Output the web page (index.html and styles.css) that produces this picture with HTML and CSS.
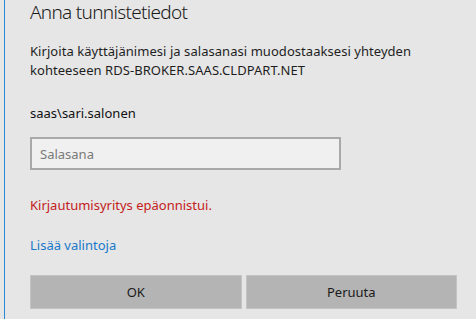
FILE: index.html
```html
<!DOCTYPE html>
<html lang="fi">
<head>
    <meta charset="UTF-8">
    <title>Anna tunnistetiedot</title>
    <link rel="stylesheet" href="styles.css">
</head>
<body>
    <div class="dialog">
        <h1 class="title">Anna tunnistetiedot</h1>
        <p class="desc">Kirjoita käyttäjänimesi ja salasanasi muodostaaksesi yhteyden<br>kohteeseen RDS-BROKER.SAAS.CLDPART.NET</p>
        <div class="user">saas\sari.salonen</div>
        <input class="password" type="password" placeholder="Salasana">
        <div class="error">Kirjautumisyritys epäonnistui.</div>
        <a class="more" href="#">Lisää valintoja</a>
        <div class="buttons">
            <button class="btn">OK</button>
            <button class="btn">Peruuta</button>
        </div>
    </div>
</body>
</html>
```

FILE: styles.css
```css
body {
    margin: 0;
    padding: 0;
    background-color: #e6e6e6;
    font-family: "Noto Sans", "Open Sans", sans-serif;
    font-size: 13px;
    line-height: 19px;
    color: #1e1e1e;
}
.dialog {
    margin-left: 4px;
    border-left: 1px solid #2b88d8;
    padding: 0 19px 10px 25px;
    height: 309px;
    display: flex;
    flex-direction: column;
    align-items: flex-start;
}
.title {
    margin: 0;
    font-size: 19px;
    line-height: 24px;
    font-weight: 300;
    letter-spacing: -0.7px;
    color: #1a1a1a;
}
.desc {
    margin: 18px 0 0;
    letter-spacing: 0.05px;
}
.user {
    margin-top: 24px;
    color: #111;
}
.password {
    margin-top: 14px;
    width: 311px;
    height: 33px;
    box-sizing: border-box;
    border: 2px solid #a9a9a9;
    background-color: #f0f0f0;
    padding: 0 8px;
    font-family: inherit;
    font-size: 13px;
    outline: none;
}
.password::placeholder {
    color: #7a7a7a;
}
.error {
    margin-top: 26px;
    color: #c42020;
}
.more {
    margin-top: 21px;
    color: #1979ca;
    text-decoration: none;
}
.buttons {
    margin-top: 20px;
    display: flex;
    gap: 4px;
    align-self: stretch;
}
.btn {
    flex: 1;
    height: 34px;
    background-color: #b4b4b4;
    border: 1px solid #c4c4c4;
    font-family: inherit;
    font-size: 13px;
    color: #1a1a1a;
    padding: 0;
}
```
